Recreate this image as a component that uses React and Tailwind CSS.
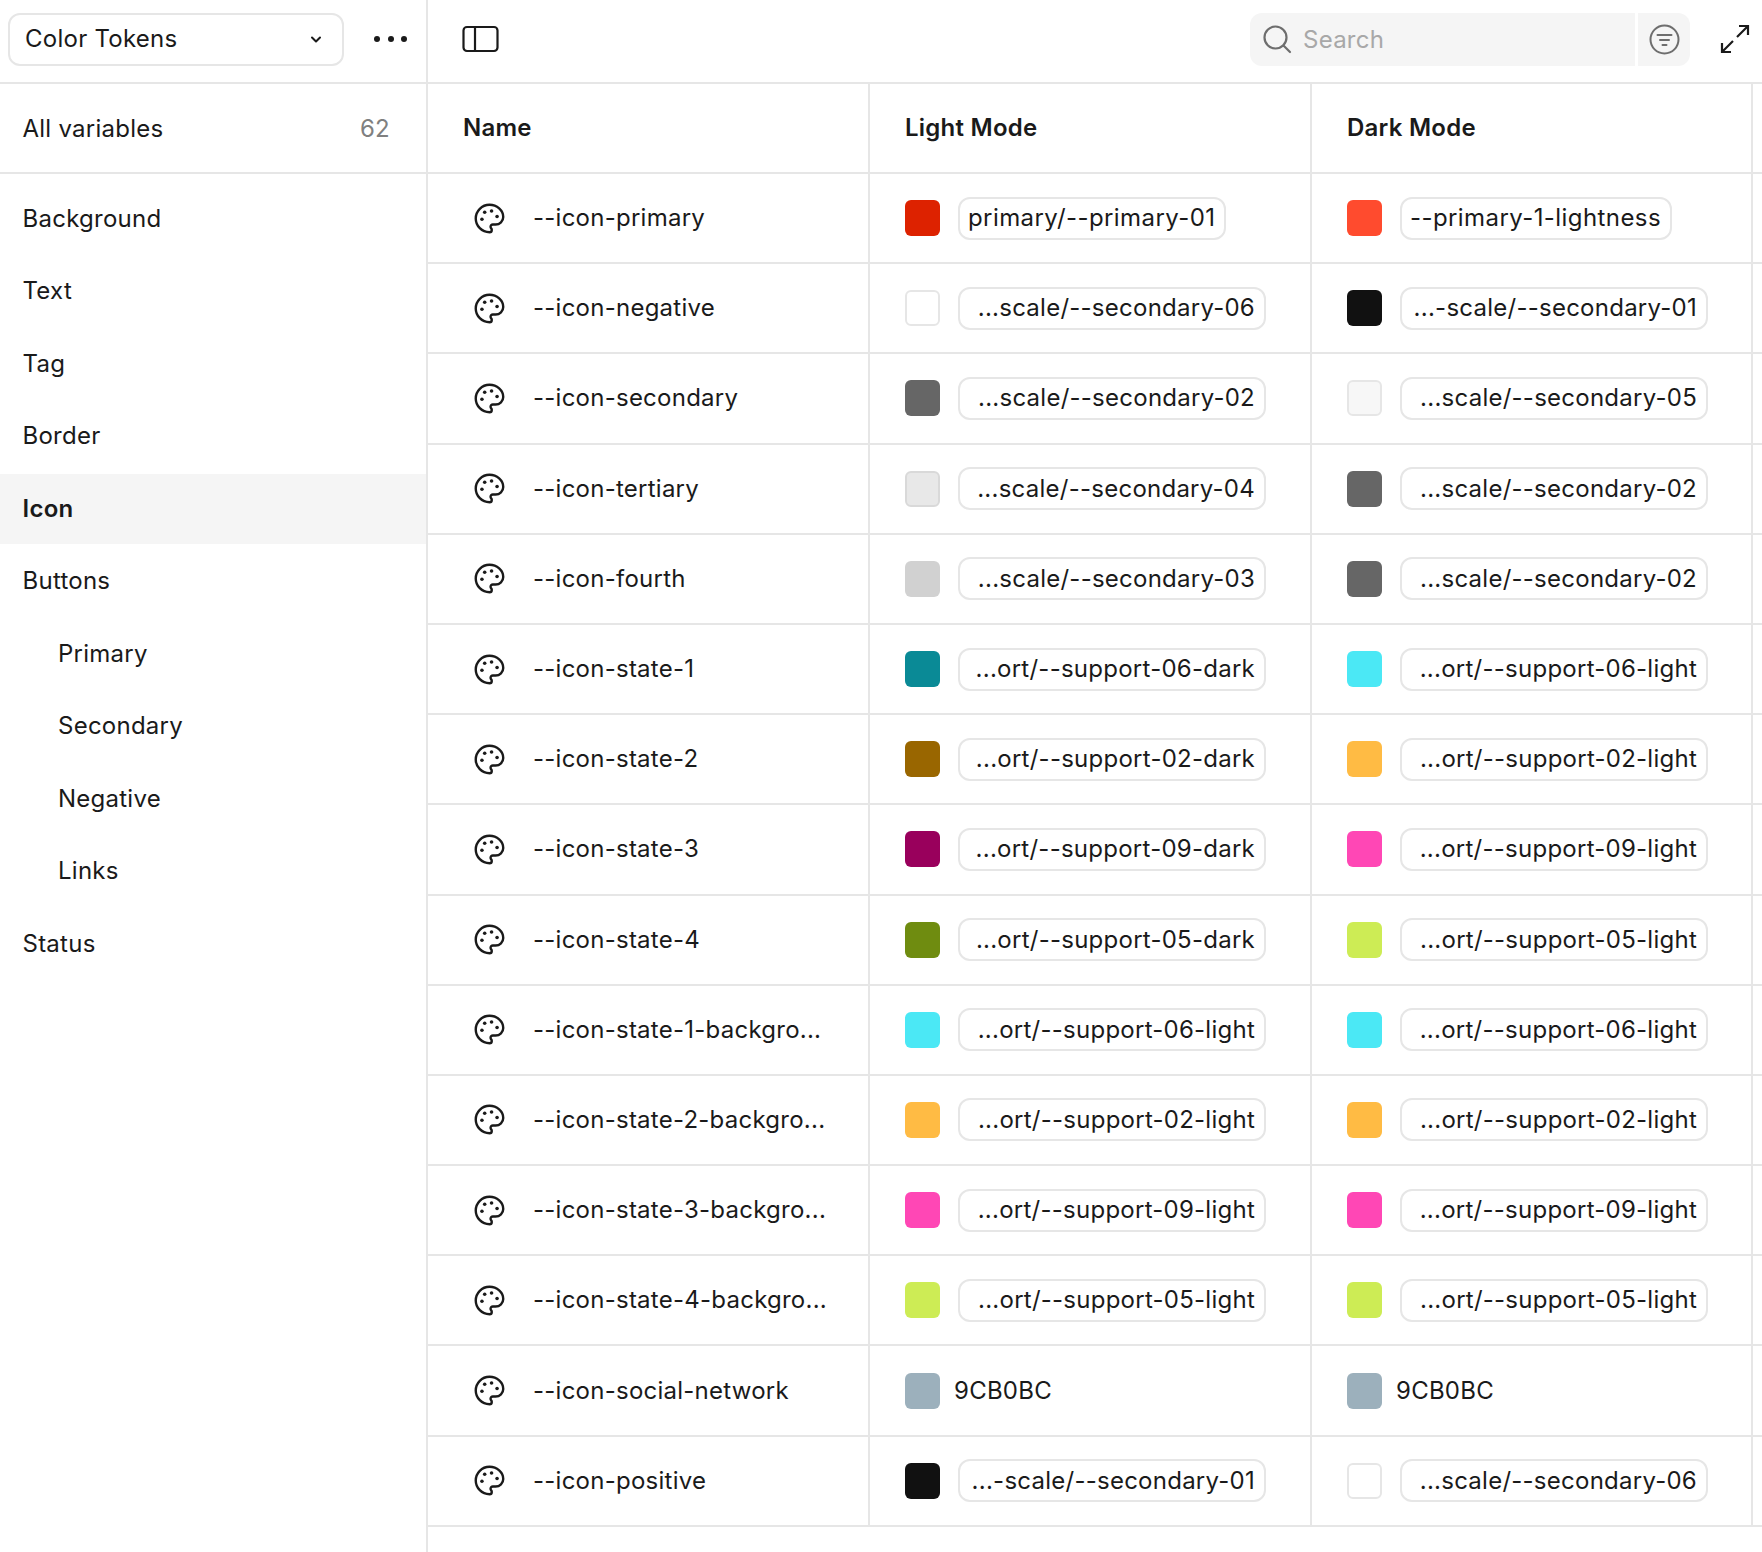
const sections = [
    { name: "Background" },
    { name: "Text" },
    { name: "Tag" },
    { name: "Border" },
    { name: "Icon", active: true },
    { name: "Buttons" },
    { name: "Primary", sub: true },
    { name: "Secondary", sub: true },
    { name: "Negative", sub: true },
    { name: "Links", sub: true },
    { name: "Status" },
];

const rows = [
    { name: "--icon-primary", light: ["bg-[#dd2200]", "primary/--primary-01"], dark: ["bg-[#ff4b2e]", "--primary-1-lightness"] },
    { name: "--icon-negative", light: ["bg-white border-2 border-[#e6e6e6]", "...scale/--secondary-06"], dark: ["bg-[#111111]", "...-scale/--secondary-01"] },
    { name: "--icon-secondary", light: ["bg-[#666666]", "...scale/--secondary-02"], dark: ["bg-[#f7f7f7] border-2 border-[#e6e6e6]", "...scale/--secondary-05"] },
    { name: "--icon-tertiary", light: ["bg-[#e8e8e8] border-2 border-[#d9d9d9]", "...scale/--secondary-04"], dark: ["bg-[#666666]", "...scale/--secondary-02"] },
    { name: "--icon-fourth", light: ["bg-[#d1d1d1]", "...scale/--secondary-03"], dark: ["bg-[#666666]", "...scale/--secondary-02"] },
    { name: "--icon-state-1", light: ["bg-[#0a8a96]", "...ort/--support-06-dark"], dark: ["bg-[#4be8f5]", "...ort/--support-06-light"] },
    { name: "--icon-state-2", light: ["bg-[#996600]", "...ort/--support-02-dark"], dark: ["bg-[#ffbb44]", "...ort/--support-02-light"] },
    { name: "--icon-state-3", light: ["bg-[#99005c]", "...ort/--support-09-dark"], dark: ["bg-[#ff47b5]", "...ort/--support-09-light"] },
    { name: "--icon-state-4", light: ["bg-[#6f8c10]", "...ort/--support-05-dark"], dark: ["bg-[#cdec55]", "...ort/--support-05-light"] },
    { name: "--icon-state-1-backgro...", light: ["bg-[#4be8f5]", "...ort/--support-06-light"], dark: ["bg-[#4be8f5]", "...ort/--support-06-light"] },
    { name: "--icon-state-2-backgro...", light: ["bg-[#ffbb44]", "...ort/--support-02-light"], dark: ["bg-[#ffbb44]", "...ort/--support-02-light"] },
    { name: "--icon-state-3-backgro...", light: ["bg-[#ff47b5]", "...ort/--support-09-light"], dark: ["bg-[#ff47b5]", "...ort/--support-09-light"] },
    { name: "--icon-state-4-backgro...", light: ["bg-[#cdec55]", "...ort/--support-05-light"], dark: ["bg-[#cdec55]", "...ort/--support-05-light"] },
    { name: "--icon-social-network", light: ["bg-[#9cb0bc]", "9CB0BC", true], dark: ["bg-[#9cb0bc]", "9CB0BC", true] },
    { name: "--icon-positive", light: ["bg-[#111111]", "...-scale/--secondary-01"], dark: ["bg-white border-2 border-[#e6e6e6]", "...scale/--secondary-06"] },
];

function PaletteIcon() {
    return (
        <svg width="33" height="33" viewBox="0 0 24 24" fill="none" stroke="#1a1a1a" strokeWidth="1.75" strokeLinecap="round" strokeLinejoin="round">
            <path d="M12 2C6.5 2 2 6.5 2 12s4.5 10 10 10c.926 0 1.648-.746 1.648-1.688 0-.437-.18-.835-.437-1.125-.29-.289-.438-.652-.438-1.125a1.64 1.64 0 0 1 1.668-1.668h1.996c3.051 0 5.555-2.503 5.555-5.554C21.965 6.012 17.461 2 12 2z" />
            <circle cx="13.5" cy="6.5" r="1.3" fill="#1a1a1a" stroke="none" />
            <circle cx="17.5" cy="10.5" r="1.3" fill="#1a1a1a" stroke="none" />
            <circle cx="8.5" cy="7.5" r="1.3" fill="#1a1a1a" stroke="none" />
            <circle cx="6.5" cy="12.5" r="1.3" fill="#1a1a1a" stroke="none" />
        </svg>
    );
}

function ValueCell({ value, width }) {
    const [swatch, label, plain] = value;
    const wide = label.startsWith("...");
    return (
        <div className={`flex h-full shrink-0 items-center border-r-2 border-[#e6e6e6] pl-[35px] ${width}`}>
            <div className={`h-[36px] w-[35px] shrink-0 rounded-[6px] ${swatch}`} />
            {plain ? (
                <span className="ml-[14px]">{label}</span>
            ) : (
                <div className={`ml-[18px] flex h-[43px] items-center justify-end rounded-[12px] border-2 border-[#e6e6e6] pl-[8px] pr-[9px] ${wide ? "w-[308px]" : "tracking-[0.42px]"}`}>
                    {label}
                </div>
            )}
        </div>
    );
}

export default function App() {
    return (
        <div className="flex h-[1552px] w-full flex-col overflow-hidden bg-white font-['Inter',sans-serif] text-[24px] tracking-[0.25px] text-[#1a1a1a]">
            {/* Top bar */}
            <header className="flex h-[84px] shrink-0 border-b-2 border-[#e6e6e6]">
                <div className="flex h-full w-[428px] shrink-0 items-center border-r-2 border-[#e6e6e6] pb-[4px] pl-[8px]">
                    <div className="flex h-[53px] w-[336px] items-center justify-between rounded-[12px] border-2 border-[#e6e6e6] pl-[15px] pr-[19px]">
                        <span>Color Tokens</span>
                        <svg width="14" height="14" viewBox="0 0 14 14" fill="none" stroke="#1a1a1a" strokeWidth="2" strokeLinecap="round" strokeLinejoin="round">
                            <path d="M3 5.5 7 9.5 11 5.5" />
                        </svg>
                    </div>
                    <div className="ml-[30px] flex items-center gap-[7.5px]">
                        <span className="h-[6px] w-[6px] rounded-full bg-[#1a1a1a]" />
                        <span className="h-[6px] w-[6px] rounded-full bg-[#1a1a1a]" />
                        <span className="h-[6px] w-[6px] rounded-full bg-[#1a1a1a]" />
                    </div>
                </div>
                <div className="flex flex-1 items-center pb-[4px] pl-[34px] pr-[12px]">
                    <svg width="37" height="28" viewBox="0 0 37 28" fill="none" stroke="#1a1a1a" strokeWidth="2.2">
                        <rect x="1.5" y="2" width="34" height="24" rx="3.5" />
                        <path d="M13 2v24" />
                    </svg>
                    <div className="ml-auto flex h-[53px] w-[385px] items-center rounded-l-[12px] bg-[#f5f5f5] pl-[12px]">
                        <svg width="30" height="30" viewBox="0 0 30 30" fill="none" stroke="#6e6e6e" strokeWidth="2.2" strokeLinecap="round">
                            <circle cx="13.5" cy="13.5" r="11" />
                            <path d="M21.5 21.5 28 28" />
                        </svg>
                        <span className="ml-[11px] pt-[1px] text-[#a8a8a8]">Search</span>
                    </div>
                    <div className="ml-[3px] flex h-[53px] w-[52px] items-center justify-center rounded-r-[12px] bg-[#f5f5f5]">
                        <svg width="31" height="31" viewBox="0 0 31 31" fill="none" stroke="#6e6e6e" strokeWidth="2" strokeLinecap="round">
                            <circle cx="15.5" cy="15.5" r="14" />
                            <path d="M8.5 11h14M11 16h9M13.5 21h4" />
                        </svg>
                    </div>
                    <svg className="ml-[30px]" width="30" height="30" viewBox="0 0 30 30" fill="none" stroke="#1a1a1a" strokeWidth="2.2">
                        <path d="M17 13 28 2M19 2h9v9M13 17 2 28M2 19v9h9" />
                    </svg>
                </div>
            </header>

            <div className="flex min-h-0 flex-1">
                {/* Sidebar */}
                <aside className="w-[428px] shrink-0 border-r-2 border-[#e6e6e6]">
                    <div className="flex h-[90px] items-center justify-between border-b-2 border-[#e6e6e6] pl-[22.5px] pr-[36px] pt-[1px]">
                        <span>All variables</span>
                        <span className="text-[#808080]">62</span>
                    </div>
                    <nav className="flex flex-col gap-[2.5px] pt-[9.5px]">
                        {sections.map((section) => (
                            <div
                                key={section.name}
                                className={`flex h-[70px] items-center ${section.sub ? "pl-[58px]" : "pl-[22.5px]"} ${section.active ? "bg-[#f5f5f5] font-semibold" : ""}`}
                            >
                                {section.name}
                            </div>
                        ))}
                    </nav>
                </aside>

                {/* Table */}
                <main className="min-w-0 flex-1">
                    <div className="flex h-[90px] items-center border-b-2 border-[#e6e6e6] font-semibold">
                        <div className="flex h-full w-[442px] shrink-0 items-center border-r-2 border-[#e6e6e6] pl-[35px]">Name</div>
                        <div className="flex h-full w-[442px] shrink-0 items-center border-r-2 border-[#e6e6e6] pl-[35px]">Light Mode</div>
                        <div className="flex h-full w-[441px] shrink-0 items-center border-r-2 border-[#e6e6e6] pl-[35px]">Dark Mode</div>
                    </div>
                    {rows.map((row) => (
                        <div key={row.name} className="flex h-[90.2px] items-center border-b-2 border-[#e6e6e6]">
                            <div className="flex h-full w-[442px] shrink-0 items-center border-r-2 border-[#e6e6e6] pl-[45px]">
                                <PaletteIcon />
                                <span className="ml-[27px]">{row.name}</span>
                            </div>
                            <ValueCell value={row.light} width="w-[442px]" />
                            <ValueCell value={row.dark} width="w-[441px]" />
                        </div>
                    ))}
                </main>
            </div>
        </div>
    );
}
